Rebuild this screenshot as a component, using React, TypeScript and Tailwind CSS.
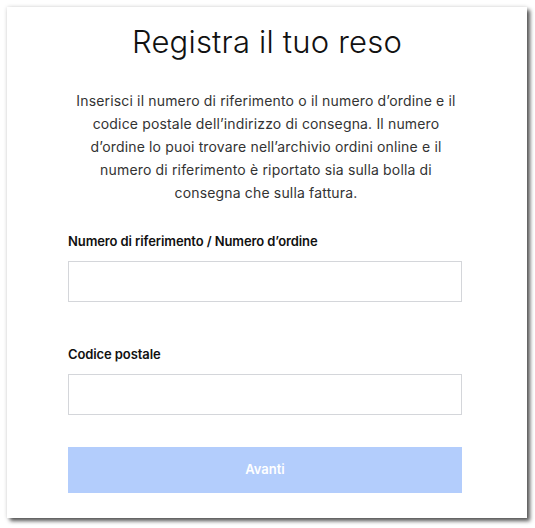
import React from "react";

export default function App() {
  return (
    <div className="w-[535px] h-[528px] bg-white pt-[7px] pl-[7px]" style={{ fontFamily: "Inter, 'Noto Sans', sans-serif" }}>
      <div className="w-[520px] h-[511px] bg-white shadow-[3px_3px_4px_rgba(0,0,0,0.65),0_0_4px_rgba(0,0,0,0.15)] flex flex-col items-center pt-[17px]">
        <h1 className="text-[31px] leading-[36px] font-light text-[#111] tracking-[0.2px]">Registra il tuo reso</h1>
        <p className="mt-[29px] mr-[2px] w-[386px] text-center text-[14px] leading-[23px] text-[#333] tracking-[0.16px]">
          Inserisci il numero di riferimento o il numero d’ordine e il codice postale dell’indirizzo di consegna. Il numero d’ordine lo puoi trovare nell’archivio ordini online e il numero di riferimento è riportato sia sulla bolla di consegna che sulla fattura.
        </p>
        <div className="w-[394px] mt-[27px] flex flex-col self-start ml-[61px]">
          <label className="text-[13px] leading-[20px] font-semibold text-[#111] tracking-[-0.1px]">Numero di riferimento / Numero d’ordine</label>
          <input className="mt-[10px] h-[41px] border border-[#d4d6da] outline-none px-3" />
          <label className="mt-[42px] text-[13px] leading-[20px] font-semibold text-[#111] tracking-[-0.1px]">Codice postale</label>
          <input className="mt-[10px] h-[41px] border border-[#d4d6da] outline-none px-3" />
          <button className="mt-[32px] h-[46px] bg-[#b3cdfc] text-white text-[13px] font-semibold">Avanti</button>
        </div>
      </div>
    </div>
  );
}
